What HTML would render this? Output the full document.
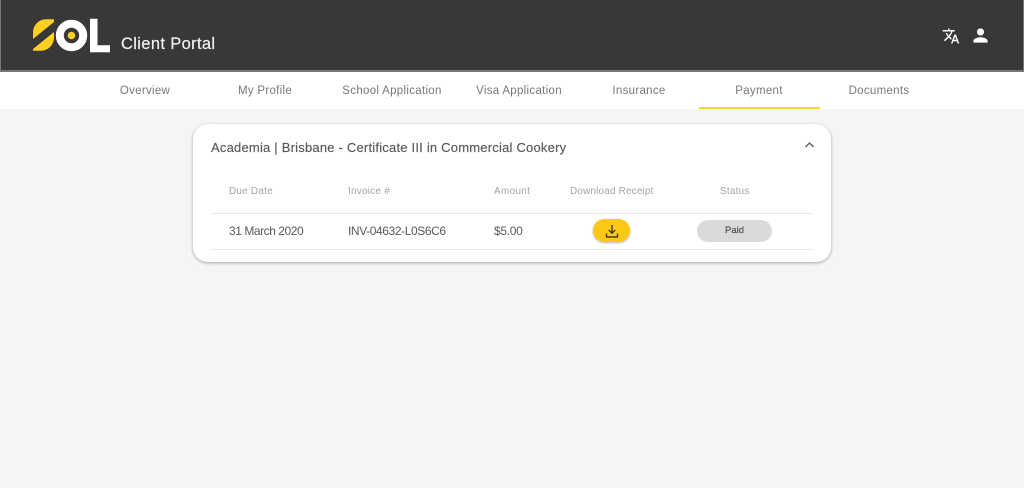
<!DOCTYPE html>
<html lang="en">
<head>
<meta charset="utf-8">
<title>SOL Client Portal</title>
<style>
html,body{margin:0;padding:0;width:1024px;height:488px;overflow:hidden;background:#f4f5f7;font-family:"Liberation Sans",sans-serif}
.abs,.abs-c{position:absolute;white-space:nowrap}
.abs-c{transform:translateX(-50%)}
header{position:absolute;left:0;top:0;width:1024px;height:72px;background:#383838;box-sizing:border-box;border:1px solid #77787a;border-top:0;border-bottom-width:2px}
nav{position:absolute;left:0;top:72px;width:1024px;height:37px;background:#fff}
.tab{top:84px;font-size:11.5px;line-height:14px;color:#77787a;letter-spacing:.3px}
.card{position:absolute;left:193px;top:124px;width:638px;height:138px;background:#fff;border-radius:15px;box-shadow:0 1px 3px rgba(0,0,0,.32)}
.th{top:185px;font-size:10px;line-height:13px;color:#a3a4a6;letter-spacing:.2px}
.td{top:224px;font-size:12px;line-height:14px;color:#58595b}
.line{position:absolute;left:211px;width:602px;height:1px;background:#e7e7e5}
.btn{position:absolute;left:593px;top:219px;width:37px;height:23px;border-radius:12px;background:#fdc915;box-shadow:0 1px 2px rgba(0,0,0,.3)}
.pill{position:absolute;left:697px;top:220px;width:75px;height:22px;border-radius:11px;background:#d9dadc;color:#58595b;font-size:9.5px;line-height:22px;text-align:center;-webkit-text-stroke:.25px #58595b}
</style>
</head>
<body>
<header></header>
<svg class="abs" style="left:30px;top:15px" width="84" height="40" viewBox="30 15 84 40">
  <path d="M54 19.300V22L33 39V32.300A13 13 0 0 1 46 19.300Z" fill="#fdd023"/>
  <path d="M33 50.700V49L54 32V37.700A13 13 0 0 1 41 50.700Z" fill="#fdd023"/>
  <circle cx="71.500" cy="35.500" r="11.700" fill="none" stroke="#fff" stroke-width="8"/>
  <circle cx="71.500" cy="35.500" r="3.800" fill="#fdd023"/>
  <path d="M90 18.700H97.500V45.300H110V52.300H90Z" fill="#fff"/>
</svg>
<div class="abs" style="left:121px;top:34px;font-size:16.5px;line-height:20px;color:#f1f1f1;letter-spacing:.35px;-webkit-text-stroke:.2px #f1f1f1">Client Portal</div>
<svg class="abs" style="left:942px;top:27px" width="18" height="18" viewBox="0 0 24 24" fill="#fff">
  <path d="M12.870 15.070l-2.540-2.510.030-.030c1.740-1.940 2.980-4.170 3.710-6.530H17V4h-7V2H8v2H1v1.990h11.170C11.500 7.920 10.440 9.750 9 11.350 8.070 10.320 7.300 9.190 6.690 8h-2c.730 1.630 1.730 3.170 2.980 4.560l-5.090 5.020L4 19l5-5 3.110 3.110.760-2.040zM18.500 10h-2L12 22h2l1.120-3h4.750L21 22h2l-4.500-12zm-2.620 7l1.620-4.330L19.120 17h-3.240z"/>
</svg>
<svg class="abs" style="left:972px;top:27px" width="17" height="17" viewBox="0 0 24 24" fill="#fff">
  <path d="M12 12c2.760 0 5-2.240 5-5s-2.240-5-5-5-5 2.240-5 5 2.240 5 5 5zm0 2.500c-3.340 0-10 1.670-10 5V22h20v-2.500c0-3.330-6.660-5-10-5z"/>
</svg>
<nav></nav>
<div class="abs-c tab" style="left:145px">Overview</div>
<div class="abs-c tab" style="left:265px">My Profile</div>
<div class="abs-c tab" style="left:392px">School Application</div>
<div class="abs-c tab" style="left:519px">Visa Application</div>
<div class="abs-c tab" style="left:639px">Insurance</div>
<div class="abs-c tab" style="left:759px">Payment</div>
<div class="abs-c tab" style="left:879px">Documents</div>
<div class="abs" style="left:699px;top:107px;width:121px;height:2px;background:#fdd535"></div>
<div class="card"></div>
<div class="abs" style="left:211px;top:140px;font-size:13px;line-height:16px;color:#58595b;letter-spacing:.21px;-webkit-text-stroke:.15px #58595b">Academia | Brisbane - Certificate III in Commercial Cookery</div>
<svg class="abs" style="left:804px;top:140px" width="11" height="10" viewBox="0 0 11 10">
  <path d="M1.500 7L5.500 3L9.500 7" fill="none" stroke="#58595b" stroke-width="1.300"/>
</svg>
<div class="abs th" style="left:229px">Due Date</div>
<div class="abs th" style="left:348px">Invoice #</div>
<div class="abs th" style="left:494px;letter-spacing:.3px">Amount</div>
<div class="abs th" style="left:570px;letter-spacing:.15px">Download Receipt</div>
<div class="abs th" style="left:720px">Status</div>
<div class="line" style="top:213px"></div>
<div class="abs td" style="left:229px;letter-spacing:-.45px">31 March 2020</div>
<div class="abs td" style="left:348px;letter-spacing:-.4px">INV-04632-L0S6C6</div>
<div class="abs td" style="left:494px;letter-spacing:-.3px">$5.00</div>
<div class="btn"></div>
<svg class="abs" style="left:605px;top:224px" width="14" height="15" viewBox="0 0 14 15">
  <path d="M7 1V9M3.800 6L7 9.300L10.200 6M1.500 9.500V13H12.500V9.500" fill="none" stroke="#3f3a28" stroke-width="1.400"/>
</svg>
<div class="pill">Paid</div>
<div class="line" style="top:249px"></div>
</body>
</html>
